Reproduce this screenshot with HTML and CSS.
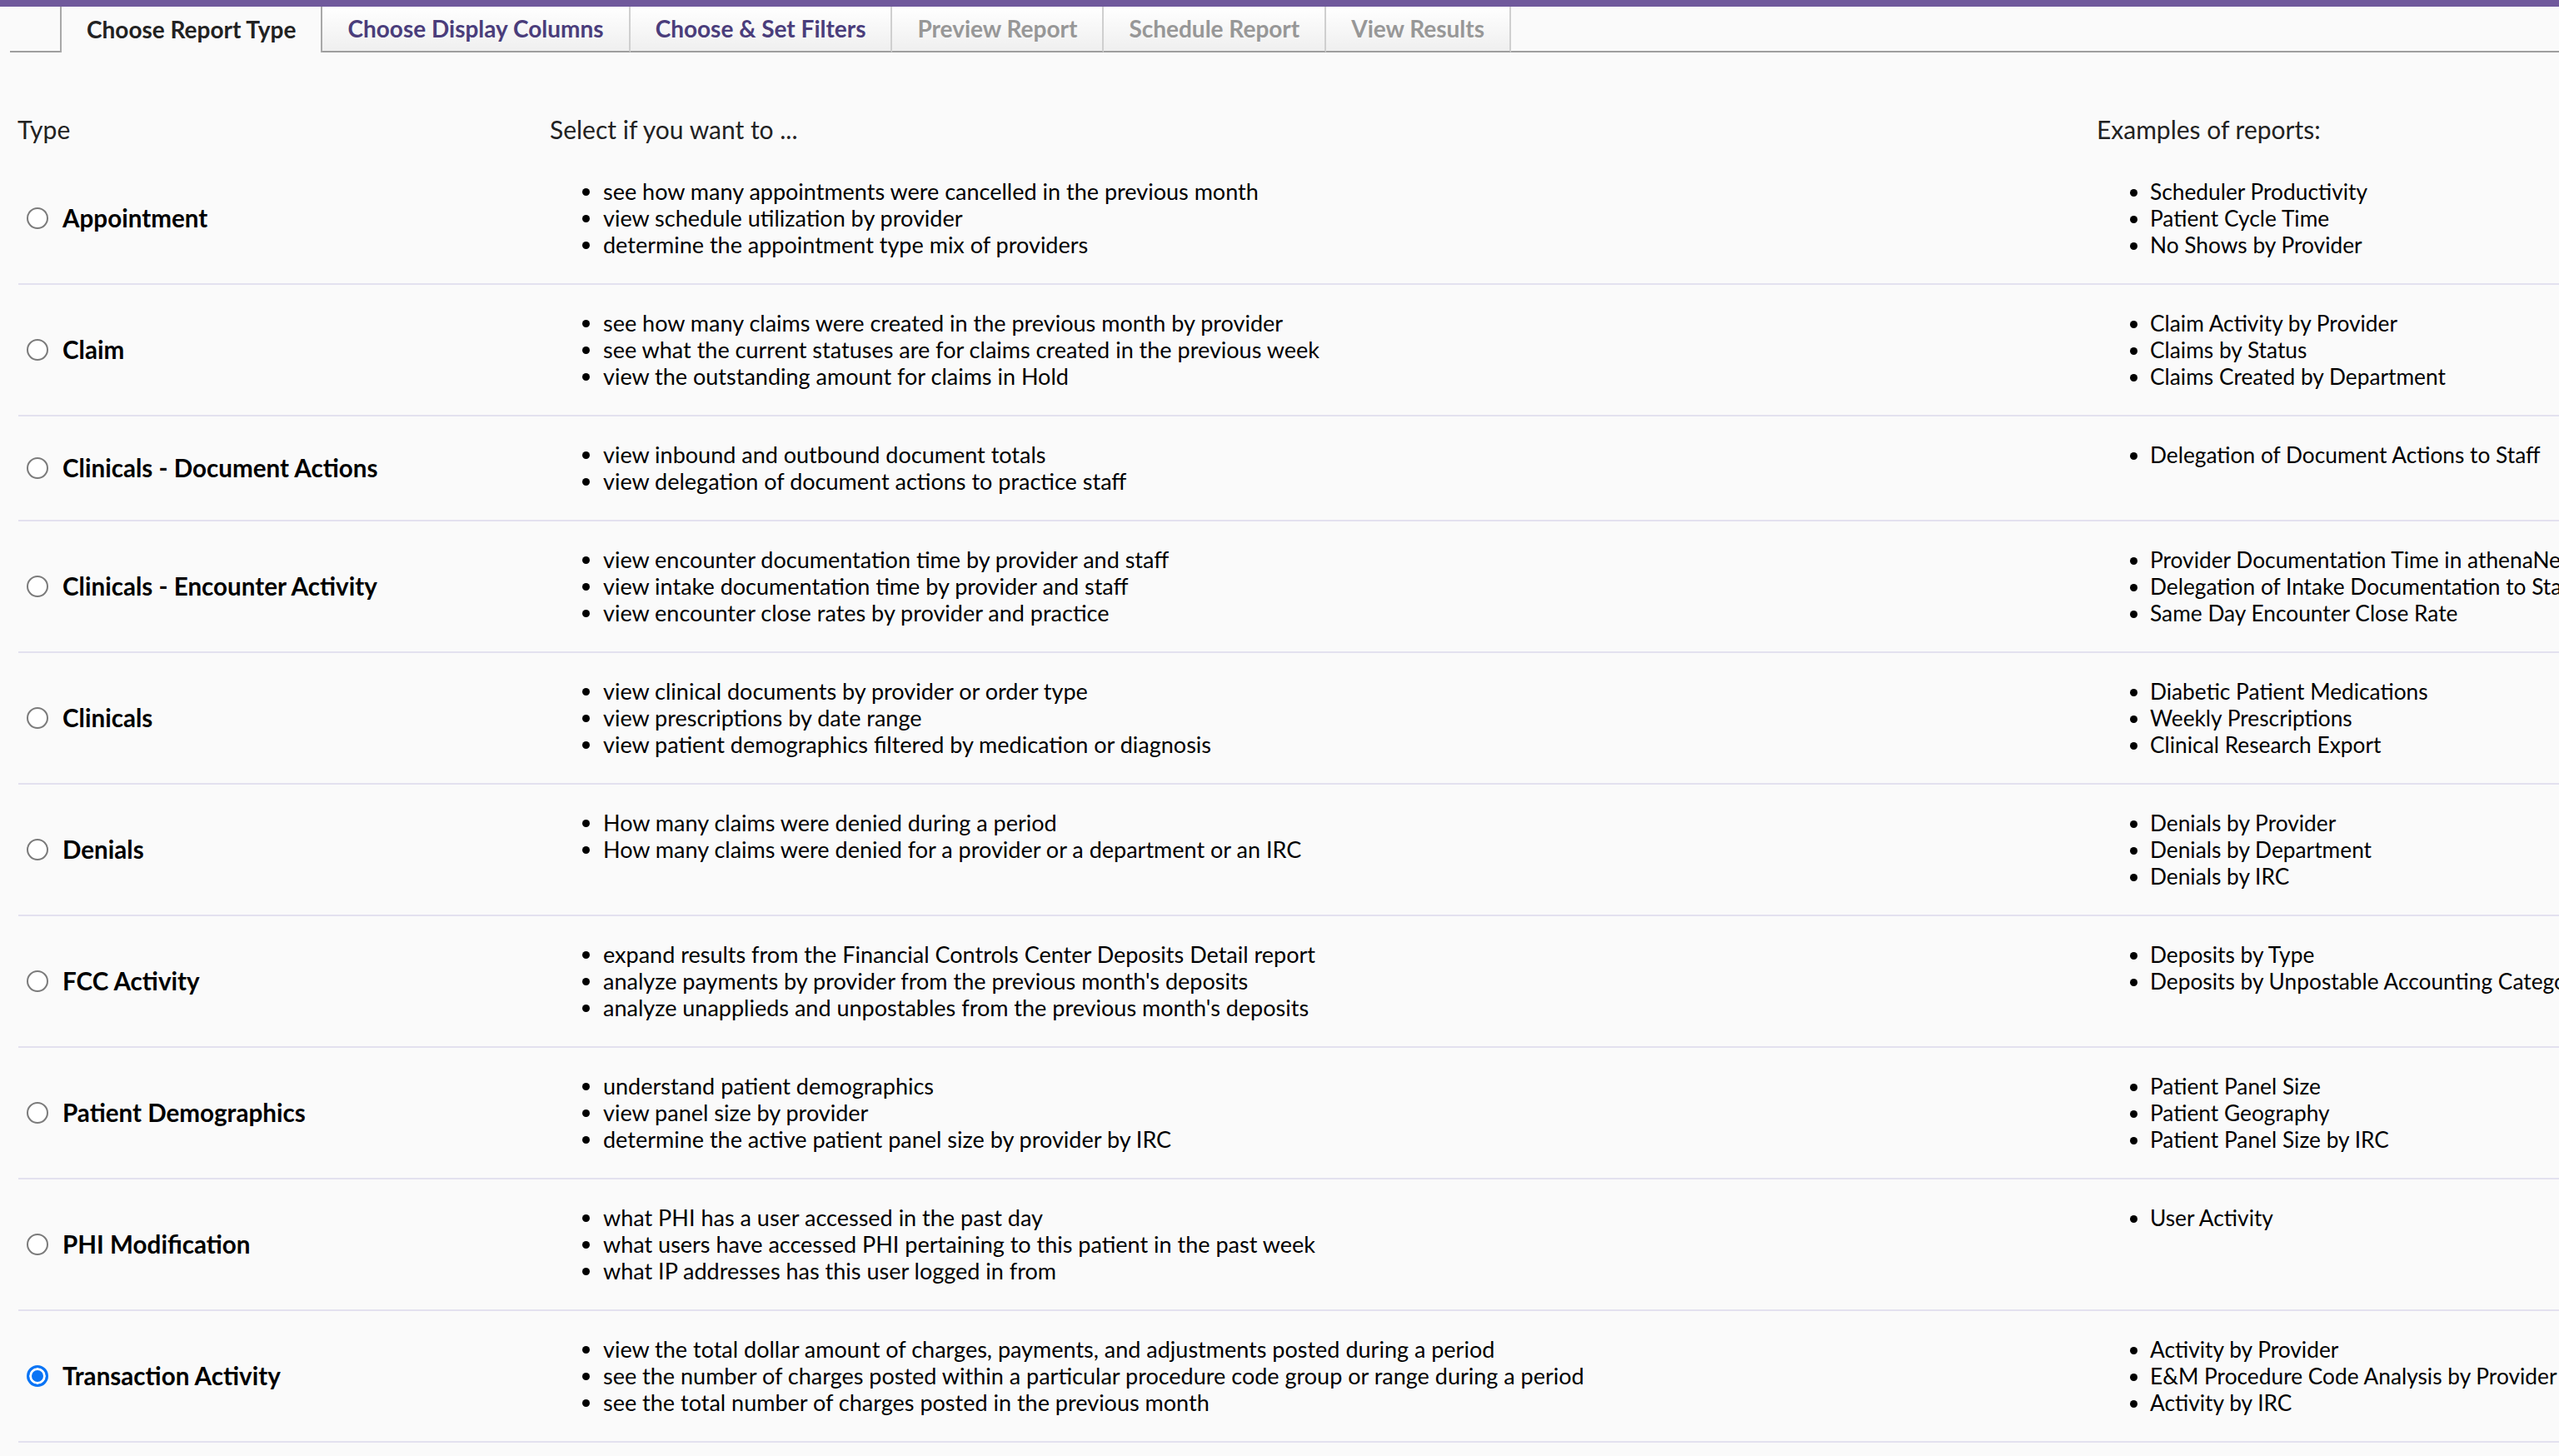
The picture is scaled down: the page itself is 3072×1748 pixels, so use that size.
FILE: index.html
```html
<!DOCTYPE html>
<html lang="en">
<head>
<meta charset="utf-8">
<title>Report Builder - Choose Report Type</title>
<link rel="stylesheet" href="styles.css">
</head>
<body>
<div class="topbar"></div>
<nav class="tabs">
  <div class="tab-spacer"></div>
  <div class="tab tab-active">Choose Report Type</div>
  <div class="tab tab-link">Choose Display Columns</div>
  <div class="tab tab-link">Choose &amp; Set Filters</div>
  <div class="tab tab-disabled">Preview Report</div>
  <div class="tab tab-disabled">Schedule Report</div>
  <div class="tab tab-disabled">View Results</div>
  <div class="tab-fill"></div>
</nav>
<main class="content">
  <table class="types">
    <colgroup>
      <col class="col-type">
      <col class="col-select">
      <col class="col-examples">
    </colgroup>
    <thead>
      <tr>
        <th>Type</th>
        <th>Select if you want to ...</th>
        <th>Examples of reports:</th>
      </tr>
    </thead>
    <tbody>
      <tr>
        <td class="type-cell"><label class="type-label"><input type="radio" name="rtype"><span>Appointment</span></label></td>
        <td><ul><li>see how many appointments were cancelled in the previous month</li><li>view schedule utilization by provider</li><li>determine the appointment type mix of providers</li></ul></td>
        <td class="examples"><ul><li>Scheduler Productivity</li><li>Patient Cycle Time</li><li>No Shows by Provider</li></ul></td>
      </tr>
      <tr>
        <td class="type-cell"><label class="type-label"><input type="radio" name="rtype"><span>Claim</span></label></td>
        <td><ul><li>see how many claims were created in the previous month by provider</li><li>see what the current statuses are for claims created in the previous week</li><li>view the outstanding amount for claims in Hold</li></ul></td>
        <td class="examples"><ul><li>Claim Activity by Provider</li><li>Claims by Status</li><li>Claims Created by Department</li></ul></td>
      </tr>
      <tr>
        <td class="type-cell"><label class="type-label"><input type="radio" name="rtype"><span>Clinicals - Document Actions</span></label></td>
        <td><ul><li>view inbound and outbound document totals</li><li>view delegation of document actions to practice staff</li></ul></td>
        <td class="examples"><ul><li>Delegation of Document Actions to Staff</li></ul></td>
      </tr>
      <tr>
        <td class="type-cell"><label class="type-label"><input type="radio" name="rtype"><span>Clinicals - Encounter Activity</span></label></td>
        <td><ul><li>view encounter documentation time by provider and staff</li><li>view intake documentation time by provider and staff</li><li>view encounter close rates by provider and practice</li></ul></td>
        <td class="examples"><ul><li>Provider Documentation Time in athenaNet</li><li>Delegation of Intake Documentation to Staff</li><li>Same Day Encounter Close Rate</li></ul></td>
      </tr>
      <tr>
        <td class="type-cell"><label class="type-label"><input type="radio" name="rtype"><span>Clinicals</span></label></td>
        <td><ul><li>view clinical documents by provider or order type</li><li>view prescriptions by date range</li><li>view patient demographics filtered by medication or diagnosis</li></ul></td>
        <td class="examples"><ul><li>Diabetic Patient Medications</li><li>Weekly Prescriptions</li><li>Clinical Research Export</li></ul></td>
      </tr>
      <tr>
        <td class="type-cell"><label class="type-label"><input type="radio" name="rtype"><span>Denials</span></label></td>
        <td><ul><li>How many claims were denied during a period</li><li>How many claims were denied for a provider or a department or an IRC</li></ul></td>
        <td class="examples"><ul><li>Denials by Provider</li><li>Denials by Department</li><li>Denials by IRC</li></ul></td>
      </tr>
      <tr>
        <td class="type-cell"><label class="type-label"><input type="radio" name="rtype"><span>FCC Activity</span></label></td>
        <td><ul><li>expand results from the Financial Controls Center Deposits Detail report</li><li>analyze payments by provider from the previous month's deposits</li><li>analyze unapplieds and unpostables from the previous month's deposits</li></ul></td>
        <td class="examples"><ul><li>Deposits by Type</li><li>Deposits by Unpostable Accounting Category</li></ul></td>
      </tr>
      <tr>
        <td class="type-cell"><label class="type-label"><input type="radio" name="rtype"><span>Patient Demographics</span></label></td>
        <td><ul><li>understand patient demographics</li><li>view panel size by provider</li><li>determine the active patient panel size by provider by IRC</li></ul></td>
        <td class="examples"><ul><li>Patient Panel Size</li><li>Patient Geography</li><li>Patient Panel Size by IRC</li></ul></td>
      </tr>
      <tr>
        <td class="type-cell"><label class="type-label"><input type="radio" name="rtype"><span>PHI Modification</span></label></td>
        <td><ul><li>what PHI has a user accessed in the past day</li><li>what users have accessed PHI pertaining to this patient in the past week</li><li>what IP addresses has this user logged in from</li></ul></td>
        <td class="examples"><ul><li>User Activity</li></ul></td>
      </tr>
      <tr>
        <td class="type-cell"><label class="type-label"><input type="radio" name="rtype" checked><span>Transaction Activity</span></label></td>
        <td><ul><li>view the total dollar amount of charges, payments, and adjustments posted during a period</li><li>see the number of charges posted within a particular procedure code group or range during a period</li><li>see the total number of charges posted in the previous month</li></ul></td>
        <td class="examples"><ul><li>Activity by Provider</li><li>E&amp;M Procedure Code Analysis by Provider</li><li>Activity by IRC</li></ul></td>
      </tr>
    </tbody>
  </table>
</main>
</body>
</html>
```

FILE: styles.css
```css
html, body {
  overflow: hidden;
}

body {
  margin: 0;
  background: #fafafa;
  color: #000;
  font-family: "Lato", "Liberation Sans", sans-serif;
  font-size: 27px;
  line-height: 32px;
}

.topbar {
  height: 8px;
  background: #70599c;
}

.tabs {
  display: flex;
  margin-left: 12px;
  height: 55px;
}

.tab-spacer {
  width: 60px;
  border-bottom: 2px solid #9e9e9e;
}

.tab-fill {
  flex: 1;
  border-bottom: 2px solid #9e9e9e;
}

.tab {
  height: 53px;
  line-height: 53px;
  padding: 0 30px;
  font-size: 28px;
  font-weight: 700;
  white-space: nowrap;
  background: linear-gradient(#ffffff, #efefef);
  border-right: 2px solid #cfcfcf;
  border-bottom: 2px solid #9e9e9e;
}

.tab-active {
  height: 55px;
  line-height: 55px;
  background: #fafafa;
  color: #222;
  border-left: 2px solid #a8a8a8;
  border-right: 2px solid #a8a8a8;
  border-bottom: none;
}

.tab-link {
  color: #4a3d7b;
}

.tab-disabled {
  color: #979797;
}

.content {
  padding: 76px 0 0 22px;
}

.types {
  table-layout: fixed;
  border-collapse: collapse;
  width: 3300px;
}

.col-type {
  width: 638px;
}

.col-select {
  width: 1857px;
}

.col-examples {
  width: 805px;
}

.types th {
  text-align: left;
  font-size: 30px;
  font-weight: 400;
  color: #222;
  padding: 0 0 13px;
  vertical-align: bottom;
}

.types th:first-child {
  position: relative;
  left: -1px;
}

.types td {
  padding: 30px 0;
  vertical-align: top;
  border-bottom: 2px solid #e3e1ef;
}

.types td.type-cell {
  vertical-align: middle;
}

.types td.examples {
  font-size: 26.3px;
}

.type-label {
  display: flex;
  align-items: center;
  font-size: 29.6px;
  font-weight: 700;
  white-space: nowrap;
}

.type-label input {
  appearance: none;
  -webkit-appearance: none;
  box-sizing: border-box;
  width: 26px;
  height: 26px;
  margin: 0 17px 0 10px;
  border: 2px solid #7b7b7b;
  border-radius: 50%;
  background: #fff;
}

.type-label input:checked {
  border: 3px solid #0a74f5;
  background: #0a74f5;
  box-shadow: inset 0 0 0 3px #fff;
}

.types ul {
  margin: 0;
  padding-left: 64px;
}

.types li {
  white-space: nowrap;
}
```
